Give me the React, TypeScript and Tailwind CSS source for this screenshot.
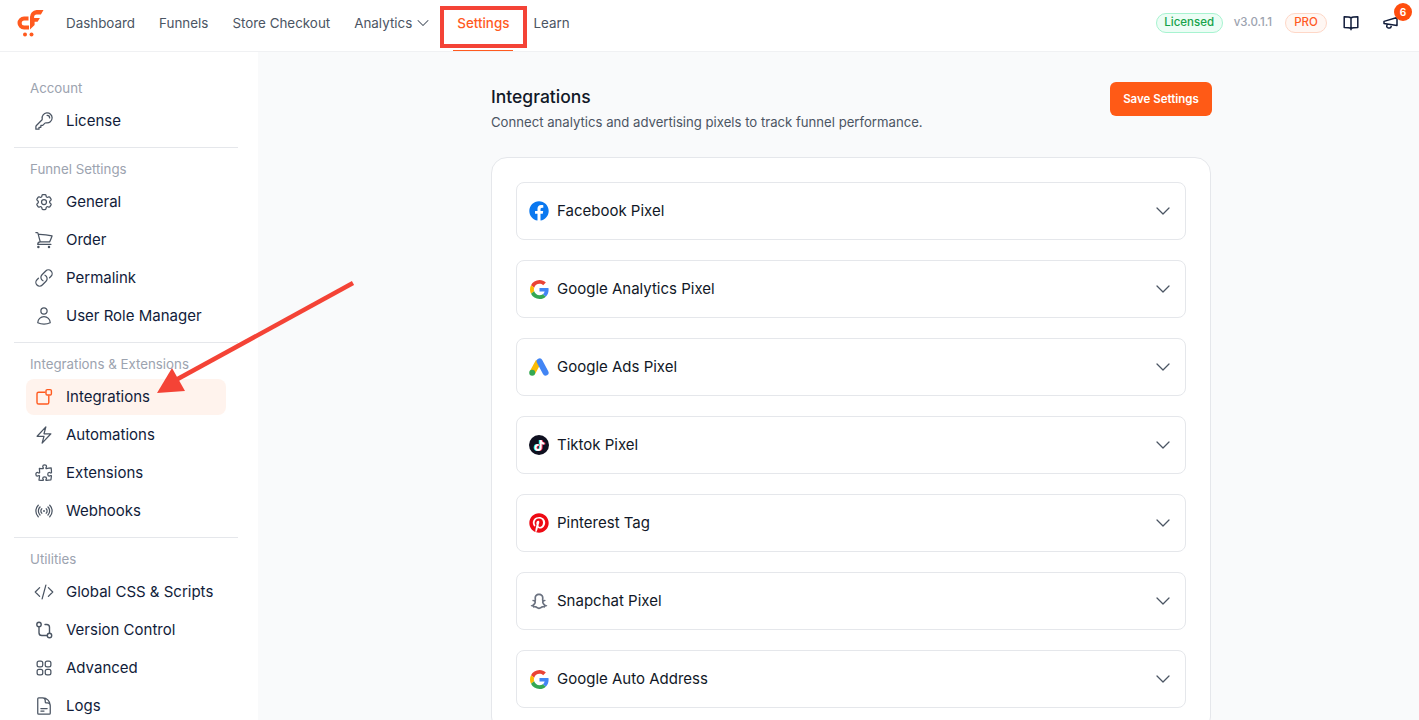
import { ChevronDown } from "lucide-react";
import { FaFacebook, FaPinterest, FaTiktok } from "react-icons/fa";
import { RiSnapchatLine } from "react-icons/ri";
import {
  HiOutlineBolt,
  HiOutlineCodeBracket,
  HiOutlineCog6Tooth,
  HiOutlineDocumentText,
  HiOutlineKey,
  HiOutlineLink,
  HiOutlinePuzzlePiece,
  HiOutlineShoppingCart,
  HiOutlineSignal,
  HiOutlineSquares2X2,
  HiOutlineUser,
} from "react-icons/hi2";
import type { ReactNode } from "react";

const navLinks = ["Dashboard", "Funnels", "Store Checkout", "Analytics", "Settings", "Learn"];

const IntegrationsIcon = () => (
  <svg viewBox="0 0 20 20" fill="none" stroke="#ff5a1f" strokeWidth="1.4" className="w-5 h-5">
    <path d="M11 5.2H4.6a1.6 1.6 0 0 0-1.6 1.6v8.6A1.6 1.6 0 0 0 4.6 17h8.6a1.6 1.6 0 0 0 1.6-1.6V9" strokeLinecap="round" />
    <rect x="12" y="2.6" width="5.4" height="5.4" rx="1.2" />
  </svg>
);

const VersionIcon = () => (
  <svg viewBox="0 0 20 20" fill="none" stroke="#4b5563" strokeWidth="1.4" className="w-5 h-5">
    <circle cx="5" cy="4.5" r="2.2" />
    <circle cx="15.5" cy="15.5" r="2.2" />
    <path d="M5 6.7v6a2.8 2.8 0 0 0 2.8 2.8h5.5M11 4.5h1.7a2.8 2.8 0 0 1 2.8 2.8v6" strokeLinecap="round" />
  </svg>
);

const GoogleIcon = () => (
  <svg viewBox="0 0 48 48" className="w-[19px] h-[19px] mx-[0.5px]">
    <path fill="#EA4335" d="M24 9.5c3.54 0 6.71 1.22 9.21 3.6l6.85-6.85C35.9 2.38 30.47 0 24 0 14.62 0 6.51 5.38 2.56 13.22l7.98 6.19C12.43 13.72 17.74 9.5 24 9.5z" />
    <path fill="#4285F4" d="M46.98 24.55c0-1.57-.15-3.09-.38-4.55H24v9.02h12.94c-.58 2.96-2.26 5.48-4.78 7.18l7.73 6c4.51-4.18 7.09-10.36 7.09-17.65z" />
    <path fill="#FBBC05" d="M10.53 28.59c-.48-1.45-.76-2.99-.76-4.59s.27-3.14.76-4.59l-7.98-6.19C.92 16.46 0 20.12 0 24c0 3.88.92 7.54 2.56 10.78l7.97-6.19z" />
    <path fill="#34A853" d="M24 48c6.48 0 11.93-2.13 15.89-5.81l-7.73-6c-2.15 1.45-4.92 2.3-8.16 2.3-6.26 0-11.57-4.22-13.47-9.91l-7.98 6.19C6.51 42.62 14.62 48 24 48z" />
  </svg>
);

const AdsIcon = () => (
  <svg viewBox="0 0 20 18" className="w-5 h-[18px]">
    <path d="M9.6 3.4 3.4 14.6" stroke="#fbbc04" strokeWidth="6" fill="none" />
    <path d="M10.6 3.4 16.6 14.6" stroke="#4285f4" strokeWidth="6" strokeLinecap="round" fill="none" />
    <circle cx="3.2" cy="14.8" r="3" fill="#34a853" />
  </svg>
);

const TiktokIcon = () => (
  <span className="relative flex items-center justify-center w-5 h-5 rounded-full bg-[#0f1020]">
    <FaTiktok className="absolute w-[11px] h-[11px] text-[#25f4ee] -translate-x-px" />
    <FaTiktok className="absolute w-[11px] h-[11px] text-[#fe2c55] translate-x-px" />
    <FaTiktok className="absolute w-[11px] h-[11px] text-white" />
  </span>
);

const BookIcon = () => (
  <svg viewBox="0 0 16 16" fill="none" stroke="#111c3a" strokeWidth="1.5" strokeLinejoin="round" className="w-4 h-4">
    <path d="M8 2.8C6.6 2 4 1.8 1.2 1.8v10.6c2.8 0 5.4.2 6.8 1 1.4-.8 4-1 6.8-1V1.8C12 1.8 9.4 2 8 2.8zM8 2.8v12.4" />
  </svg>
);

const HornIcon = () => (
  <svg viewBox="0 0 16 16" fill="none" stroke="#111c3a" strokeWidth="1.5" strokeLinejoin="round" className="w-4 h-4">
    <path d="M1 6.4 14 2.5v8L1 8.6zM4 9.2l-.2 2a1.5 1.5 0 0 0 1.4 1.7l1.3.1a1.5 1.5 0 0 0 1.6-1.3l.1-.8" />
  </svg>
);

const sections: { title: string; items: { label: string; icon: ReactNode; active?: boolean }[] }[] = [
  { title: "Account", items: [{ label: "License", icon: <HiOutlineKey className="w-5 h-5" /> }] },
  {
    title: "Funnel Settings",
    items: [
      { label: "General", icon: <HiOutlineCog6Tooth className="w-5 h-5" /> },
      { label: "Order", icon: <HiOutlineShoppingCart className="w-5 h-5" /> },
      { label: "Permalink", icon: <HiOutlineLink className="w-5 h-5" /> },
      { label: "User Role Manager", icon: <HiOutlineUser className="w-5 h-5" /> },
    ],
  },
  {
    title: "Integrations & Extensions",
    items: [
      { label: "Integrations", icon: <IntegrationsIcon />, active: true },
      { label: "Automations", icon: <HiOutlineBolt className="w-5 h-5" /> },
      { label: "Extensions", icon: <HiOutlinePuzzlePiece className="w-5 h-5" /> },
      { label: "Webhooks", icon: <HiOutlineSignal className="w-5 h-5" /> },
    ],
  },
  {
    title: "Utilities",
    items: [
      { label: "Global CSS & Scripts", icon: <HiOutlineCodeBracket className="w-5 h-5" /> },
      { label: "Version Control", icon: <VersionIcon /> },
      { label: "Advanced", icon: <HiOutlineSquares2X2 className="w-5 h-5" /> },
      { label: "Logs", icon: <HiOutlineDocumentText className="w-5 h-5" /> },
    ],
  },
];

const integrations: { label: string; icon: ReactNode }[] = [
  { label: "Facebook Pixel", icon: <FaFacebook className="w-5 h-5 text-[#0a78f0]" /> },
  { label: "Google Analytics Pixel", icon: <GoogleIcon /> },
  { label: "Google Ads Pixel", icon: <AdsIcon /> },
  { label: "Tiktok Pixel", icon: <TiktokIcon /> },
  { label: "Pinterest Tag", icon: <FaPinterest className="w-5 h-5 text-[#ee0a14]" /> },
  { label: "Snapchat Pixel", icon: <RiSnapchatLine className="w-5 h-5 text-[#6b7280]" /> },
  { label: "Google Auto Address", icon: <GoogleIcon /> },
];

const Logo = () => (
  <svg viewBox="0 0 28 28" className="w-[28px] h-[28px] mb-[5px]" fill="#ff5a1f">
    <path d="M12.5 7.5H8a6.5 6.5 0 0 0 0 13h5v-4H8.2a2.5 2.5 0 0 1 0-5h4.3z" />
    <path d="M14 20.5V8a7 7 0 0 1 6.5-7H27.5l-2.6 4.4h-4.3a2.5 2.5 0 0 0-2.5 2.5v1.2h5.8l-2.3 3.6H18.600V16l-4.600 4.500z" />
    <circle cx="9" cy="25.500" r="2" />
    <circle cx="15.500" cy="25.500" r="2" />
  </svg>
);

export default function App() {
  return (
    <div className="relative h-screen overflow-hidden bg-[#f9fafb] text-[#111827] font-['Inter',sans-serif]">
      <header className="flex h-[52px] items-center border-b border-[#f0f1f3] bg-white pl-4 pr-3">
        <Logo />
        <nav className="ml-[22px] flex h-full items-center gap-6 text-[13.4px] text-[#4b5563]">
          {navLinks.map((link) => (
            <a
              key={link}
              className={`relative flex h-full items-center pb-[5px] ${link === "Settings" ? "font-medium text-[#ff5a1f]" : ""}`}
            >
              {link}
              {link === "Analytics" && <ChevronDown className="w-5 h-5 ml-px" strokeWidth={1.25} />}
              {link === "Settings" && <span className="absolute -left-1 -right-1 bottom-0 h-px bg-[#ff5a1f]" />}
            </a>
          ))}
        </nav>
        <div className="ml-auto mb-[5px] flex items-center text-[11.5px]">
          <span className="flex h-5 w-[67px] items-center justify-center rounded-full border border-[#a7f3d0] bg-[#ecfdf5] font-medium text-[#16a34a]">
            Licensed
          </span>
          <span className="ml-[11px] font-medium text-[#9ca3af]">v3.0.1.1</span>
          <span className="ml-[13px] flex h-5 w-[42px] items-center justify-center rounded-full border border-[#fed7c7] bg-[#fff7f3] font-medium text-[#ff5a1f]">
            PRO
          </span>
          <span className="ml-4"><BookIcon /></span>
          <span className="relative ml-[24px] mr-[8px]">
            <HornIcon />
            <span className="absolute -right-[13px] -top-[12px] flex h-[18px] w-[18px] items-center justify-center rounded-full bg-[#ff4d0d] text-[10px] font-bold text-white">
              6
            </span>
          </span>
        </div>
      </header>

      <div className="flex">
        <aside className="w-[258px] shrink-0 bg-white pl-3.5 pr-5 pt-[26px]">
          {sections.map((section, i) => (
            <div key={section.title} className={i > 0 ? "mt-[8px] border-t border-[#e5e7eb] pt-[11px]" : ""}>
              <p className="pl-4 text-[13.3px] leading-5 text-[#9ca3af] whitespace-nowrap">{section.title}</p>
              <ul className="mt-[5px] flex flex-col gap-0.5 px-3">
                {section.items.map((item) => (
                  <li
                    key={item.label}
                    className={`flex h-9 items-center gap-3 rounded-lg px-2 text-[15px] text-[#111c3a] ${item.active ? "bg-[#fff3ed]" : ""}`}
                  >
                    <span className="text-[#4b5563]">{item.icon}</span>
                    {item.label}
                  </li>
                ))}
              </ul>
            </div>
          ))}
        </aside>

        <main className="w-[720px] ml-[233px] pt-[30px] shrink-0">
          <div className="flex items-start justify-between">
            <div>
              <h1 className="text-[17.5px] leading-[30px] font-medium text-[#111827]">Integrations</h1>
              <p className="text-[13.15px] leading-5 text-[#4b5563]">
                Connect analytics and advertising pixels to track funnel performance.
              </p>
            </div>
            <button className="h-[34px] w-[102px] -mr-px rounded-md bg-[#ff5a16] pt-px text-[11.5px] font-semibold text-white">
              Save Settings
            </button>
          </div>
          <div className="mt-[25px] flex flex-col gap-5 rounded-2xl border border-[#e5e7eb] bg-white p-6">
            {integrations.map((row) => (
              <div
                key={row.label}
                className="flex h-[58px] items-center gap-[8px] rounded-lg border border-[#e5e7eb] bg-white pl-3 pr-2.5 text-[15px] text-[#111827]"
              >
                {row.icon}
                <span>{row.label}</span>
                <ChevronDown className="ml-auto w-6 h-6 text-[#4b5563]" strokeWidth={1.25} />
              </div>
            ))}
          </div>
        </main>
      </div>

      {/* annotation marks drawn over the screenshot */}
      <div className="absolute left-[440px] top-[6px] h-[42px] w-[87px] border-4 border-[#f44336]" />
      <svg className="absolute left-0 top-0 pointer-events-none" width="400" height="420" viewBox="0 0 400 420">
        <path d="M353 283 174 381" stroke="#f44336" strokeWidth="4.5" fill="none" />
        <path d="M157 393 172 368 185 391z" fill="#f44336" />
      </svg>
    </div>
  );
}
